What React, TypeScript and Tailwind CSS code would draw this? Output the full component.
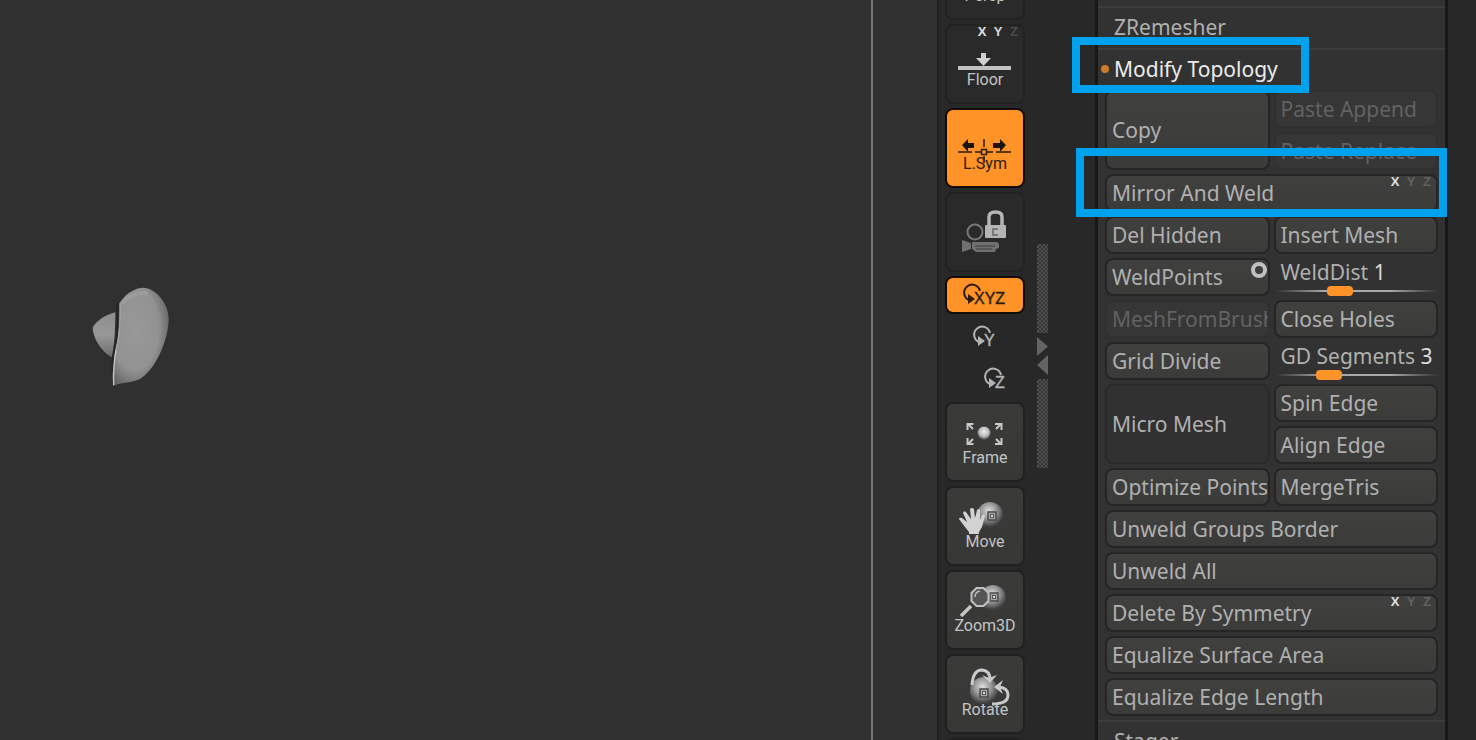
import type { ReactNode } from "react";

function Axes({ y = false }: { y?: boolean }) {
  return (
    <span className="absolute top-0.5 right-1.5 flex gap-1.5 font-['Liberation_Sans'] text-[13px] leading-3 font-black">
      <span className="w-2.5 text-center text-[#e0e0e0]">X</span>
      <span className={`w-2.5 text-center ${y ? "text-[#d8d8d8]" : "text-[#626262]"}`}>Y</span>
      <span className={`w-2.5 text-center ${y ? "text-[#4a4a4a]" : "text-[#626262]"}`}>Z</span>
    </span>
  );
}

function Ball({ cx, cy, r }: { cx: number; cy: number; r: number }) {
  return <circle cx={cx} cy={cy} r={r} fill="url(#ball)" />;
}

function Pivot({ x, y }: { x: number; y: number }) {
  return (
    <g>
      <rect x={x - 4} y={y - 4} width="8" height="8" fill="#a8a8a8" stroke="#4a4a4a" strokeWidth="1.5" />
      <rect x={x - 1.5} y={y - 1.5} width="3" height="3" fill="#ddd" stroke="#555" />
    </g>
  );
}

type ToolProps = {
  label?: string;
  name?: string;
  tone?: "flat" | "raised" | "active";
  children?: ReactNode;
};

const tones = {
  flat: "border-[#222] bg-[#2a2a2a] text-[#c4c4c4]",
  raised: "border-[#202020] bg-linear-to-b from-[#3a3a39] to-[#373736] text-[#c4c4c4]",
  active: "border-[#130d07] bg-[#ff9327] text-[#2b1c0c]",
};

function Tool({ label, name, tone = "raised", children }: ToolProps) {
  return (
    <button
      type="button"
      aria-label={name ?? label}
      className={`relative flex h-20 w-20 shrink-0 flex-col items-center rounded-lg border-2 ${tones[tone]}`}
    >
      <svg viewBox="8 2 64 46" className="h-[46px] w-16 shrink-0 overflow-visible" fill="none">
        {children}
      </svg>
      <span className="relative h-4 font-['Roboto'] text-base leading-4">{label}</span>
    </button>
  );
}

function Spin({ axis, x, active = false }: { axis: string; x: number; active?: boolean }) {
  const color = active ? "#2b1c0c" : "#b4b4b4";
  return (
    <button
      type="button"
      aria-label={`Rotate ${axis}`}
      className={`h-[38px] w-20 shrink-0 rounded-lg border-2 ${active ? "border-[#130d07] bg-[#ff9327]" : "border-transparent"}`}
    >
      <svg viewBox="2 2 76 34" className="h-[34px] w-[76px]" fill="none">
        <path d={`M${x - 3} 24a8 8 0 1 1 11-9`} stroke={color} strokeWidth="2" />
        <path d={`M${x - 4} 18l7 5-7 5z`} fill={color} />
        <text x={x + 2} y="28" fontSize="16" fontFamily="Liberation Sans" fill={color} stroke={color} strokeWidth="0.4">
          {axis}
        </text>
      </svg>
    </button>
  );
}

function Toolbar() {
  return (
    <nav aria-label="Viewport tools" className="flex w-[86px] shrink-0 flex-col gap-1 overflow-hidden pl-1.5">
      <div className="flex h-5 shrink-0 items-end overflow-hidden">
        <Tool label="Persp" tone="flat" />
      </div>
      <div className="relative">
        <Tool label="Floor" tone="flat">
          <rect x="13" y="42" width="53" height="4" fill="#c2c2c2" />
          <path d="M36 29h5v5h5l-7.5 8-7.5-8h5z" fill="#d0d0d0" />
        </Tool>
        <Axes y />
      </div>
      <Tool label="L.Sym" tone="active">
        <path d="M17 37l6-6v4h6v5h-6v4zM61 37l-6-6v4h-7v5h7v4z" fill="#1d140a" />
        <path d="M13 44h14M30 44h6M42 44h6M51 44h15M39 31v8M39 48v7" stroke="#5c3812" strokeWidth="2" />
        <rect x="36.500" y="41.500" width="5" height="5" stroke="#2b1c0c" strokeWidth="1.500" />
      </Tool>
      <Tool name="Lock camera" tone="flat">
        <circle cx="30" cy="40" r="7.500" stroke="#777" strokeWidth="2" />
        <path d="M17 48l9 3v6l-9 3zM27 50h25l2 2v4l-3 1-1 3H31l-4-3z" fill="#707070" />
        <path d="M30 54h20M31 57h16" stroke="#3c3c3c" />
        <path d="M44 34v-9q0-5 6.500-5t6.500 5v9" stroke="#b5b5b5" strokeWidth="3.500" />
        <rect x="40" y="33" width="21" height="13" rx="1" fill="#b5b5b5" />
        <path d="M53 37h-5v6h5" stroke="#666" strokeWidth="1.500" />
      </Tool>
      <Spin axis="XYZ" x={27} active />
      <Spin axis="Y" x={37} />
      <Spin axis="Z" x={48} />
      <Tool label="Frame">
        <circle cx="39" cy="31" r="6.500" fill="url(#bead)" />
        <path
          d="M22.500 28v-6h6M23 22l5 5M50 22h6.500v6M56 22l-5 5M22.500 36v6h6M23 42l5-5M50 42h6.500v-6M56 42l-5-5"
          stroke="#c8c8c8"
          strokeWidth="2"
        />
      </Tool>
      <Tool label="Move">
        <Ball cx={45} cy={29} r={13} />
        <Pivot x={47} y={30} />
        <path
          d="M24 48v-2l-4-5-6-8q0-2 3-1l5 4-4-9q1-3 3-1l5 7-1-10q2-2 4 0l1 9 2-8q2-2 3 0v10l2-5q3-1 3 1l-3 11-3 5v2z"
          fill="#d2d2d2"
        />
      </Tool>
      <Tool label="Zoom3D">
        <Ball cx={48} cy={28} r={13} />
        <Pivot x={49} y={27} />
        <path d="M26 36l-10 10" stroke="#c6c6c6" strokeWidth="3.500" />
        <path d="M31.500 18h7l5 5v8l-5 5h-7l-5-5v-8z" fill="#555" stroke="#c2c2c2" strokeWidth="2" />
        <path d="M30 27q0-5 5-6" stroke="#bbb" strokeWidth="1.500" />
      </Tool>
      <Tool label="Rotate">
        <Ball cx={39} cy={37} r={14} />
        <path d="M27 31q1-15 10-15 8 1 8 9" stroke="#cacaca" strokeWidth="3" />
        <path d="M37 21l7 3 8-3-7 8z" fill="#cacaca" />
        <path d="M47 50q16 0 16-9 0-7-9-8" stroke="#cacaca" strokeWidth="3" />
        <path d="M49 33l9-7-3 7 3 7z" fill="#cacaca" />
        <Pivot x={39} y={39} />
      </Tool>
      <Tool label="" name="Next tool" />
    </nav>
  );
}

function Grip() {
  return (
    <div className="h-[89px] w-[11px] bg-[repeating-conic-gradient(#505050_0_25%,#343434_0_50%)] bg-size-[4px_4px]" />
  );
}

function Divider() {
  return (
    <div className="flex w-[70px] shrink-0 flex-col items-start gap-1 pt-[244px] pl-3">
      <Grip />
      <svg viewBox="0 0 11 38" className="h-[38px] w-[11px]" fill="#646464">
        <path d="M0 0v19l11-9.500zM11 18v20L0 28z" />
      </svg>
      <Grip />
    </div>
  );
}

type CellProps = { label: string; wide?: boolean; tall?: boolean; off?: boolean; flat?: boolean; children?: ReactNode };

function Cell({ label, wide, tall, off, flat, children }: CellProps) {
  let look = "border-[#252525] bg-linear-to-b from-[#40403f] to-[#3b3b3a] text-[#b0b0b0]";
  if (off) look = "border-[#303030] bg-[#363636] text-[#626262]";
  if (flat) look = "border-[#2a2a2a] bg-[#313131] text-[#b0b0b0]";
  return (
    <div className={`relative ${wide ? "col-span-2" : ""} ${tall ? "row-span-2" : ""}`}>
      <button
        type="button"
        disabled={off}
        className={`h-full w-full overflow-hidden rounded-lg border-2 pl-[5px] text-left whitespace-nowrap ${look}`}
      >
        {label}
      </button>
      {children}
    </div>
  );
}

function SliderCell({ id, label, value, position }: { id: string; label: string; value: number; position: number }) {
  return (
    <div className="flex flex-col pl-0.5">
      <label htmlFor={id} className="pl-[5px] leading-7 whitespace-nowrap text-[#b0b0b0]">
        {label} <span className="text-[#dcdcdc]">{value}</span>
      </label>
      <input
        id={id}
        type="range"
        defaultValue={position}
        aria-valuetext={String(value)}
        className="h-2.5 w-full appearance-none bg-[linear-gradient(90deg,transparent,#aaa_30%,#aaa_70%,transparent)] bg-size-[100%_2px] bg-center bg-no-repeat [&::-webkit-slider-thumb]:h-2.5 [&::-webkit-slider-thumb]:w-[26px] [&::-webkit-slider-thumb]:appearance-none [&::-webkit-slider-thumb]:rounded [&::-webkit-slider-thumb]:bg-[#ff9327]"
      />
    </div>
  );
}

function Section({ title, open, children }: { title: string; open?: boolean; children?: ReactNode }) {
  return (
    <h2 className="relative h-[42px] shrink-0 border-t-2 border-[#3c3c3c]">
      <button
        type="button"
        className={`flex h-full w-full items-center pb-0.5 text-left ${open ? "text-[#ececec]" : "text-[#b0b0b0]"}`}
      >
        <span className={`mr-[5px] ml-[3px] size-2 rounded-full ${open ? "bg-[#cf7a2a]" : ""}`} />
        {title}
      </button>
      {children}
    </h2>
  );
}

function Panel() {
  return (
    <aside className="flex w-[353px] shrink-0 flex-col border-x-3 border-[#171717] bg-[#323232] pt-1.5 font-['Noto_Sans'] text-[21px] leading-7">
      <Section title="ZRemesher" />
      <Section title="Modify Topology" open>
        <span className="pointer-events-none absolute -top-[13px] -left-[26px] z-10 h-14 w-[237px] border-8 border-[#00a2ed]" />
      </Section>
      <div className="grid auto-rows-[38px] grid-cols-2 gap-1 px-[7px] pb-1">
        <Cell label="Copy" tall />
        <Cell label="Paste Append" off />
        <Cell label="Paste Replace" off />
        <Cell label="Mirror And Weld" wide>
          <Axes />
          <span className="pointer-events-none absolute -top-[26px] -right-[9px] -left-[29px] z-10 h-[69px] border-8 border-[#00a2ed]" />
        </Cell>
        <Cell label="Del Hidden" />
        <Cell label="Insert Mesh" />
        <Cell label="WeldPoints">
          <span className="absolute top-1 right-[3px] size-4 rounded-full border-4 border-[#c0c0c0]" />
        </Cell>
        <SliderCell id="weld-dist" label="WeldDist" value={1} position={38} />
        <Cell label="MeshFromBrush" off />
        <Cell label="Close Holes" />
        <Cell label="Grid Divide" />
        <SliderCell id="gd-segments" label="GD Segments" value={3} position={30} />
        <Cell label="Micro Mesh" tall flat />
        <Cell label="Spin Edge" />
        <Cell label="Align Edge" />
        <Cell label="Optimize Points" />
        <Cell label="MergeTris" />
        <Cell label="Unweld Groups Border" wide />
        <Cell label="Unweld All" wide />
        <Cell label="Delete By Symmetry" wide>
          <Axes />
        </Cell>
        <Cell label="Equalize Surface Area" wide />
        <Cell label="Equalize Edge Length" wide />
      </div>
      <Section title="Stager" />
    </aside>
  );
}

function Sculpt() {
  return (
    <svg viewBox="0 0 330 375" className="absolute top-[275px] left-20 h-[125px] w-[110px]">
      <defs>
        <radialGradient id="clay" cx="0.4" cy="0.42" r="0.65">
          <stop offset="0" stopColor="#989898" />
          <stop offset="0.65" stopColor="#929292" />
          <stop offset="1" stopColor="#626262" />
        </radialGradient>
        <linearGradient id="flap" x1="0" y1="0" x2="0" y2="1">
          <stop offset="0" stopColor="#8c8c8c" />
          <stop offset="0.5" stopColor="#989898" />
          <stop offset="1" stopColor="#6c6c6c" />
        </linearGradient>
        <radialGradient id="ball" cx="0.45" cy="0.35" r="0.6">
          <stop offset="0" stopColor="#dedede" />
          <stop offset="0.5" stopColor="#989898" />
          <stop offset="1" stopColor="#3c3c3c" />
        </radialGradient>
        <radialGradient id="bead" cx="0.5" cy="0.4" r="0.6">
          <stop offset="0" stopColor="#eee" />
          <stop offset="0.6" stopColor="#bbb" />
          <stop offset="1" stopColor="#555" />
        </radialGradient>
      </defs>
      <path d="M106 112C80 118 50 135 38 158c2 32 22 67 57 89 8-32 11-87 11-135z" fill="url(#flap)" />
      <path
        d="M118 85C140 50 170 38 190 38c35 0 78 47 76 97-2 65-41 150-86 177-30 13-60 10-80 21-4-43-2-83 5-113 13-40 13-90 13-135z"
        fill="url(#clay)"
      />
      <path d="M130 82c18-22 42-30 68-28" fill="none" stroke="#a6a6a6" strokeWidth="12" strokeLinecap="round" opacity="0.5" />
      <path d="M113 82c-3 45 4 90-9 135q-7 35-7 75" fill="none" stroke="#252525" strokeWidth="6" />
      <path d="M121 85c-1 50 0 95-13 140" fill="none" stroke="#a8a8a8" strokeWidth="3" />
      <path d="M108 225q-9 50-7 106" fill="none" stroke="#c8c8c8" strokeWidth="4" />
    </svg>
  );
}

export default function App() {
  return (
    <div className="flex h-screen overflow-hidden bg-[#282828]">
      <main className="relative flex-1 bg-[#303030]">
        <Sculpt />
      </main>
      <div className="w-[68px] shrink-0 border-r-2 border-l-2 border-r-[#202020] border-l-[#777] bg-[#303030]" />
      <Toolbar />
      <Divider />
      <Panel />
      <div className="w-[28px] shrink-0" />
    </div>
  );
}
